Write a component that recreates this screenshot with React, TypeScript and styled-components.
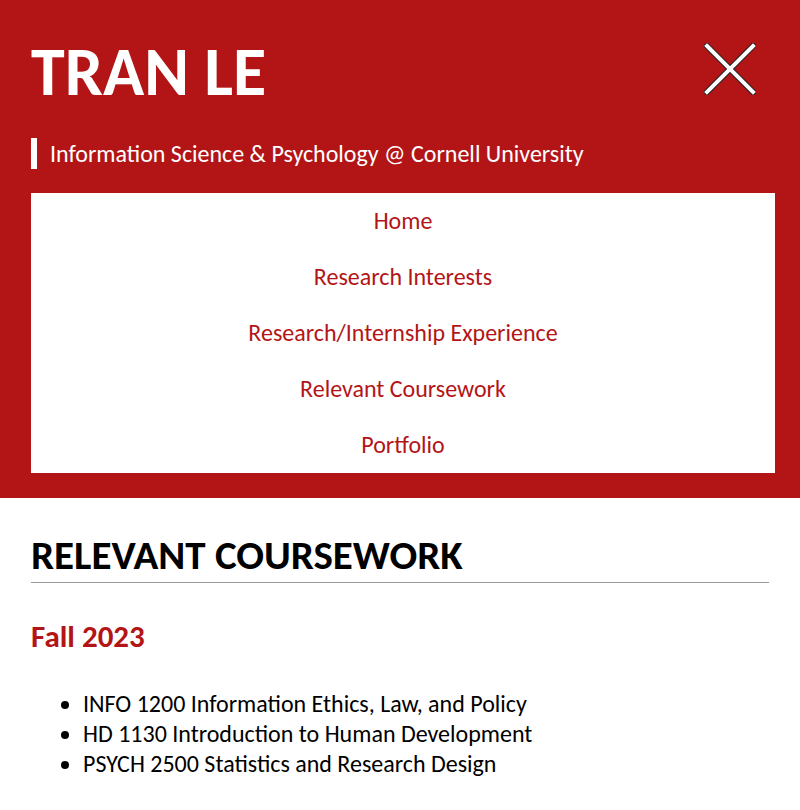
import React from "react";
import styled, { createGlobalStyle } from "styled-components";

const RED = "#b31517";

const GlobalStyle = createGlobalStyle`
  html, body { margin: 0; padding: 0; background: #ffffff; }
  body { font-family: "Carlito", "Calibri", "Lato", sans-serif; color: #000; }
  * { box-sizing: border-box; }
`;

const Header = styled.header`
  background: ${RED};
  padding: 26px 25px 25px 31px;
`;

const TopRow = styled.div`
  display: flex;
  justify-content: space-between;
  align-items: flex-start;
`;

const Name = styled.h1`
  margin: 4px 0 0 0;
  color: #fff;
  font-size: 68px;
  font-weight: 700;
  line-height: 83px;
`;

const CloseButton = styled.button`
  background: none;
  border: none;
  padding: 0;
  margin: 17px 19px 0 0;
  width: 52px;
  height: 52px;
  cursor: pointer;
  display: flex;
`;

const Tagline = styled.p`
  margin: 25px 0 0 0;
  border-left: 6px solid #fff;
  padding-left: 13px;
  color: #fff;
  font-size: 24px;
  line-height: 31px;
`;

const Nav = styled.nav`
  margin-top: 24px;
  background: #fff;
  display: flex;
  flex-direction: column;
`;

const NavLink = styled.a`
  display: block;
  height: 56px;
  line-height: 56px;
  text-align: center;
  color: ${RED};
  font-size: 24px;
  text-decoration: none;
`;

const Main = styled.main`
  padding: 30px 31px 0 31px;
`;

const SectionTitle = styled.h2`
  margin: 0;
  font-size: 41px;
  font-weight: 700;
  line-height: 54px;
  border-bottom: 1px solid #999;
`;

const Term = styled.h3`
  margin: 33px 0 0 0;
  color: ${RED};
  font-size: 31px;
  font-weight: 700;
  line-height: 40px;
`;

const CourseList = styled.ul`
  margin: 33px 0 0 0;
  padding-left: 52px;
`;

const Course = styled.li`
  font-size: 24px;
  line-height: 30px;
`;

const navItems = [
  "Home",
  "Research Interests",
  "Research/Internship Experience",
  "Relevant Coursework",
  "Portfolio",
];

const courses = [
  "INFO 1200 Information Ethics, Law, and Policy",
  "HD 1130 Introduction to Human Development",
  "PSYCH 2500 Statistics and Research Design",
];

function CloseIcon() {
  return (
    <svg width="52" height="52" viewBox="0 0 52 52">
      <g strokeLinecap="square">
        <line x1="3" y1="3" x2="49" y2="49" stroke="#222" strokeWidth="6" />
        <line x1="49" y1="3" x2="3" y2="49" stroke="#222" strokeWidth="6" />
        <line x1="3" y1="3" x2="49" y2="49" stroke="#fff" strokeWidth="4" />
        <line x1="49" y1="3" x2="3" y2="49" stroke="#fff" strokeWidth="4" />
      </g>
    </svg>
  );
}

export default function App() {
  return (
    <>
      <GlobalStyle />
      <Header>
        <TopRow>
          <Name>TRAN LE</Name>
          <CloseButton aria-label="Close menu">
            <CloseIcon />
          </CloseButton>
        </TopRow>
        <Tagline>Information Science &amp; Psychology @ Cornell University</Tagline>
        <Nav>
          {navItems.map((item) => (
            <NavLink key={item} href="#">
              {item}
            </NavLink>
          ))}
        </Nav>
      </Header>
      <Main>
        <SectionTitle>RELEVANT COURSEWORK</SectionTitle>
        <Term>Fall 2023</Term>
        <CourseList>
          {courses.map((c) => (
            <Course key={c}>{c}</Course>
          ))}
        </CourseList>
      </Main>
    </>
  );
}
